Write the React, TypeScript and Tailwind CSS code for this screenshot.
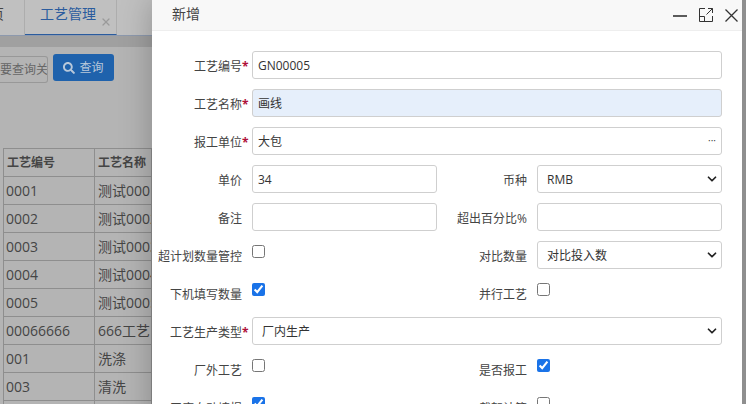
import { ChevronDown, X } from "lucide-react";
import { FaSearch } from "react-icons/fa";

const fontStack = { fontFamily: '"Open Sans", "Noto Sans CJK SC", sans-serif' };

const processRows = [
  { code: "0001", name: "测试0001" },
  { code: "0002", name: "测试0002" },
  { code: "0003", name: "测试0003" },
  { code: "0004", name: "测试0004" },
  { code: "0005", name: "测试0005" },
  { code: "00066666", name: "666工艺" },
  { code: "001", name: "洗涤" },
  { code: "003", name: "清洗" },
  { code: "", name: "" },
];

function Label({ text, required }: { text: string; required?: boolean }) {
  return (
    <label className={`h-7 flex items-center justify-end text-xs leading-none text-[#444] pt-1 whitespace-nowrap ${required ? "pr-[2px]" : "pr-[10px]"}`}>
      {text}
      {required && <span className="w-2 text-[#b0103a] font-bold">*</span>}
    </label>
  );
}

function TextField({ value = "", wide, highlight }: { value?: string; wide?: boolean; highlight?: boolean }) {
  return (
    <input
      readOnly
      value={value}
      className={`h-7 w-full rounded-[3px] border border-[#cfcfcf] px-[5px] text-xs text-[#333] outline-none ${wide ? "col-span-3" : ""} ${highlight ? "bg-[#e6effb]" : "bg-white"}`}
    />
  );
}

function SelectField({ value, wide }: { value: string; wide?: boolean }) {
  return (
    <div className={`relative h-7 ${wide ? "col-span-3" : ""}`}>
      <select
        value={value}
        onChange={() => {}}
        className="h-7 w-full appearance-none rounded-[3px] border border-[#cfcfcf] bg-white px-[9px] pt-[2px] text-xs text-[#333] outline-none"
      >
        <option>{value}</option>
      </select>
      <ChevronDown className="absolute right-[3px] top-[7px] w-[14px] h-[14px] text-[#222] pointer-events-none" strokeWidth={3} />
    </div>
  );
}

function CheckField({ checked }: { checked?: boolean }) {
  return (
    <div className="h-7 flex items-start pt-1">
      <input type="checkbox" readOnly checked={!!checked} className="w-[13px] h-[13px] m-0 accent-[#1a73e8]" />
    </div>
  );
}

export default function App() {
  return (
    <div className="relative w-[746px] h-[404px] overflow-hidden bg-[#b4b4b4]" style={fontStack}>
      {/* Page behind the dialog */}
      <div className="flex h-[36px] bg-[#c0c0c0] border-b border-[#8d99ad]">
        <div className="w-[25px] border-r border-[#adadad] text-sm text-[#444] overflow-hidden pt-1">
          <span className="block -ml-[10px]">页</span>
        </div>
        <div className="w-[92px] border-r border-[#adadad] flex pl-[15px] pt-1 text-sm text-[#2b5c9e] border-b border-b-[#2b5c9e] gap-[4px]">
          工艺管理
          <X className="w-3 h-3 mt-3 text-[#9a9a9a]" strokeWidth={2.5} />
        </div>
      </div>
      <div className="h-[11px] bg-[#a0a0a0]" />
      <div className="flex items-start gap-[5px] pt-[7px] pl-0 h-[101px]">
        <div className="w-[48px] h-[27px] mt-[2px] rounded-r-[3px] border border-l-0 border-[#989898] text-xs text-[#666] overflow-hidden whitespace-nowrap leading-[26px] text-right">
          要查询关
        </div>
        <button className="w-[61px] h-[27px] flex items-center justify-center gap-1 rounded-[3px] bg-[#1f62ac] text-xs text-[#b8c8da]">
          <FaSearch className="w-3 h-3" />
          查询
        </button>
      </div>
      <table className="ml-[3px] w-[149px] table-fixed border-collapse text-sm text-[#454545]">
        <thead>
          <tr className="h-[28px] text-xs font-bold text-left">
            <th className="w-[91px] border border-[#8e8e8e] pl-[3px]">工艺编号</th>
            <th className="border border-[#8e8e8e] pl-[3px]">工艺名称</th>
          </tr>
        </thead>
        <tbody>
          {processRows.map((row, index) => (
            <tr key={index} className="h-[28px]">
              <td className="border border-[#8e8e8e] pl-[2px] whitespace-nowrap overflow-hidden">{row.code}</td>
              <td className="border border-[#8e8e8e] pl-[3px] whitespace-nowrap overflow-hidden">{row.name}</td>
            </tr>
          ))}
        </tbody>
      </table>

      {/* Dialog */}
      <div className="absolute left-[152px] top-0 w-[590px] h-[430px] bg-white shadow-[0_0_30px_rgba(0,0,0,0.25)]">
        <div className="h-[31px] flex items-center justify-between bg-[#f8f8f8] border-b border-[#eeeeee] pl-5 pr-1">
          <span className="text-sm text-[#444] -mt-[2px]">新增</span>
          <div className="flex items-center gap-3 text-[#333]">
            <svg viewBox="0 0 14 14" className="w-[14px] h-[14px]" fill="none" stroke="currentColor" strokeWidth="1.6">
              <path d="M0 8h14" />
            </svg>
            <svg viewBox="0 0 14 14" className="w-[14px] h-[14px]" fill="none" stroke="currentColor" strokeWidth="1">
              <path d="M6 .5H.5v13h13V8M9 .5h4.500V5M13.500 .5L7.500 6.500" />
              <path d="M.5 8.500h5v5" />
            </svg>
            <svg viewBox="0 0 13 13" className="w-[13px] h-[13px]" fill="none" stroke="currentColor" strokeWidth="1.300">
              <path d="M.5 .5l12 12M12.500 .5l-12 12" />
            </svg>
          </div>
        </div>
        <form className="grid grid-cols-[100px_185px_100px_185px] gap-y-[10px] pt-5">
          <Label text="工艺编号" required />
          <TextField value="GN00005" wide />
          <Label text="工艺名称" required />
          <TextField value="画线" wide highlight />
          <Label text="报工单位" required />
          <div className="relative col-span-3 h-7">
            <TextField value="大包" />
            <span className="absolute right-[6px] top-2 text-[10px] leading-none text-[#444]">···</span>
          </div>
          <Label text="单价" />
          <TextField value="34" />
          <Label text="币种" />
          <SelectField value="RMB" />
          <Label text="备注" />
          <TextField />
          <Label text="超出百分比%" />
          <TextField />
          <Label text="超计划数量管控" />
          <CheckField />
          <Label text="对比数量" />
          <SelectField value="对比投入数" />
          <Label text="下机填写数量" />
          <CheckField checked />
          <Label text="并行工艺" />
          <CheckField />
          <Label text="工艺生产类型" required />
          <SelectField value="厂内生产" wide />
          <Label text="厂外工艺" />
          <CheckField />
          <Label text="是否报工" />
          <CheckField checked />
          <Label text="工序自动填报" />
          <CheckField checked />
          <Label text="载架计算" />
          <CheckField />
        </form>
      </div>
      <div className="absolute left-[742px] top-0 w-1 h-full bg-[#8f8f8f]" />
    </div>
  );
}
